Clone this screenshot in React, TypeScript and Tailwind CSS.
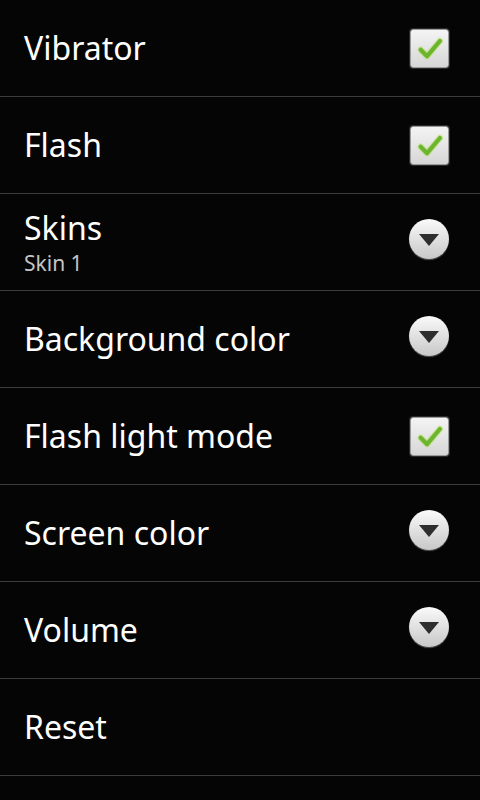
type Pref = {
  title: string
  summary?: string
  widget?: "check" | "list"
}

const prefs: Pref[] = [
  { title: "Vibrator", widget: "check" },
  { title: "Flash", widget: "check" },
  { title: "Skins", summary: "Skin 1", widget: "list" },
  { title: "Background color", widget: "list" },
  { title: "Flash light mode", widget: "check" },
  { title: "Screen color", widget: "list" },
  { title: "Volume", widget: "list" },
  { title: "Reset" },
]

function CheckBox() {
  return (
    <div className="flex h-[39px] w-[39px] items-center justify-center rounded-[3px] border border-[#9a9a9a] bg-gradient-to-b from-[#f4f4f4] to-[#d6d6d6] shadow-[0_0_0_1px_#2a2a2a]">
      <svg viewBox="0 0 24 24" className="h-[28px] w-[28px]">
        <path
          d="M4 13.5 L9.5 19 L20.5 6"
          fill="none"
          stroke="#b6e06a"
          strokeWidth="5.5"
          strokeLinecap="round"
          strokeLinejoin="round"
          opacity="0.6"
        />
        <path
          d="M4 13.5 L9.5 19 L20.5 6"
          fill="none"
          stroke="#6cb52c"
          strokeWidth="3.6"
          strokeLinecap="round"
          strokeLinejoin="round"
        />
      </svg>
    </div>
  )
}

function ListArrow() {
  return (
    <div className="-mt-[6px] flex h-[40px] w-[40px] items-center justify-center rounded-full bg-gradient-to-b from-[#fafafa] to-[#c8c8c8] shadow-[0_1px_1px_#555]">
      <svg viewBox="0 0 20 12" className="mt-[2px] h-[12px] w-[20px]">
        <path d="M0 0 H20 L10 12 Z" fill="#2e2e2e" />
      </svg>
    </div>
  )
}

export default function App() {
  return (
    <div className="min-h-screen w-[480px] bg-[#050505] font-['Noto_Sans',sans-serif] text-white">
      {prefs.map((p) => (
        <div key={p.title} className="flex h-[97px] items-center border-b border-[#3c3c3c] pl-[24px] pr-[31px]">
          <div className="flex flex-1 flex-col">
            <span className="text-[32px] leading-[40px]">{p.title}</span>
            {p.summary && <span className="mt-[2px] text-[21px] leading-[26px] text-[#c4c4c4]">{p.summary}</span>}
          </div>
          {p.widget === "check" && <CheckBox />}
          {p.widget === "list" && <ListArrow />}
        </div>
      ))}
    </div>
  )
}
